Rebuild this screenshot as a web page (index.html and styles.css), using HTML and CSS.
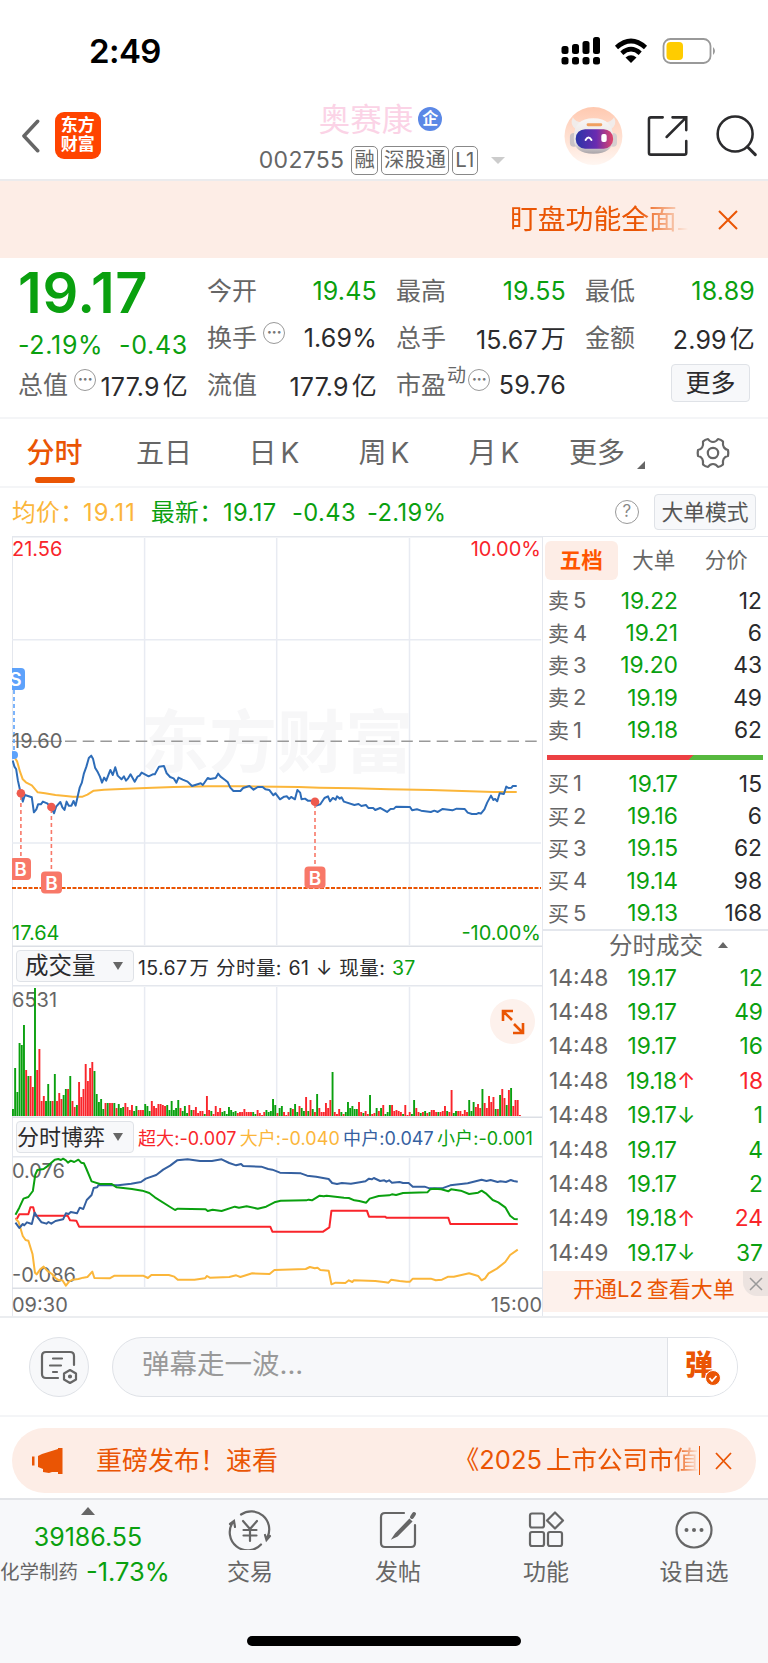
FILE: index.html
```html
<!DOCTYPE html>
<html lang="zh-CN">
<head>
    <meta charset="UTF-8">
    <meta name="viewport" content="width=device-width, initial-scale=1.0">
    <title>奥赛康 002755</title>
    <link rel="stylesheet" href="styles.css">
</head>
<body>
    <!-- Status bar -->
    <div class="status">
        <span class="clock">2:49</span>
        <svg class="status-icons" width="160" height="30" viewBox="0 0 160 30">
            <g fill="#000">
                <rect x="3.500" y="11" width="7" height="8" rx="2.500"/><rect x="14" y="9" width="7" height="10" rx="2.500"/>
                <rect x="24.500" y="6" width="7" height="13" rx="2.500"/><rect x="35" y="2" width="7" height="17" rx="2.500"/>
                <rect x="3.500" y="22" width="7" height="7.500" rx="2.500"/><rect x="14" y="22" width="7" height="7.500" rx="2.500"/>
                <rect x="24.500" y="22" width="7" height="7.500" rx="2.500"/><rect x="35" y="22" width="7" height="7.500" rx="2.500"/>
                <path d="M73 28l-5.500-5.500q5.500-4.500 11 0z"/>
            </g>
            <g fill="none" stroke="#000" stroke-width="4.600"><path d="M58.500 12.500q14.500-13 29 0M63.800 18.200q9.200-8 18.400 0"/></g>
            <rect x="105.500" y="4" width="47" height="24" rx="7" fill="none" stroke="#999" stroke-width="1.800"/>
            <path d="M155 12q4 4 0 8z" fill="#999"/>
            <rect x="108.500" y="7" width="16.500" height="18" rx="4" fill="#ffcc00"/>
        </svg>
    </div>

    <!-- Title bar -->
    <div class="header">
        <svg class="back" width="20" height="34" viewBox="0 0 20 34"><path d="M17 2L3 17l14 15" fill="none" stroke="#666" stroke-width="3.6" stroke-linecap="round" stroke-linejoin="round"/></svg>
        <div class="logo">东方<br>财富</div>
        <div class="title">
            <div class="name">奥赛康<span class="qi">企</span></div>
            <div class="code">002755<span class="tag">融</span><span class="tag">深股通</span><span class="tag">L1</span><i class="caret"></i></div>
        </div>
        <svg class="robot" width="60" height="60" viewBox="0 0 60 60">
            <defs>
                <linearGradient id="peach" x1="0" y1="0" x2="0" y2="1"><stop offset="0" stop-color="#ffc9b0"/><stop offset="1" stop-color="#fff6f1"/></linearGradient>
                <linearGradient id="visor"><stop offset="0" stop-color="#2a35a8"/><stop offset=".55" stop-color="#6a2bb0"/><stop offset="1" stop-color="#e0466a"/></linearGradient>
                <linearGradient id="shell" x1="0" y1="0" x2="0" y2="1"><stop offset="0" stop-color="#f8f6f5"/><stop offset=".7" stop-color="#e6e2e2"/><stop offset="1" stop-color="#aaa4a8"/></linearGradient>
            </defs>
            <circle cx="30" cy="30" r="29.5" fill="url(#peach)"/>
            <path d="M9 11q-4 8 4 13l8-8q-9 1-12-5zM51 11q4 8-4 13l-8-8q9 1 12-5z" fill="#f1ecea"/>
            <rect x="6" y="27" width="8" height="14" rx="4" fill="#c9c3c6"/><rect x="46" y="27" width="8" height="14" rx="4" fill="#d6cfd0"/>
            <path d="M10 32q0-20 20-20t20 20q0 16-20 16T10 32z" fill="url(#shell)"/>
            <rect x="23" y="17" width="16" height="3" rx="1.500" fill="#f0a060"/>
            <rect x="12" y="23" width="38" height="20" rx="9.500" fill="url(#visor)"/>
            <path d="M22 34q3-5 6 0" fill="none" stroke="#fff" stroke-width="2" stroke-linecap="round"/>
            <rect x="38" y="28" width="5.500" height="8" rx="2" fill="#fff"/>
        </svg>
        <svg class="share" width="42" height="42" viewBox="0 0 42 42"><path d="M16 2H4q-2 0-2 2v34q0 2 2 2h34q2 0 2-2V26M26 2h14v13M39 3L20 22" fill="none" stroke="#2b2b2d" stroke-width="2.6" stroke-linecap="round"/></svg>
        <svg class="search" width="42" height="42" viewBox="0 0 42 42"><circle cx="19.500" cy="19" r="17.800" fill="none" stroke="#2b2b2d" stroke-width="2.6"/><path d="M32 32l8 8" stroke="#2b2b2d" stroke-width="3" stroke-linecap="round"/></svg>
    </div>

    <div class="notice">
        <span class="notice-text">盯盘功能全面上</span>
        <svg width="20" height="20" viewBox="0 0 20 20"><path d="M1 1l18 18M19 1L1 19" stroke="#ea5504" stroke-width="2"/></svg>
    </div>

    <!-- Quote -->
    <div class="quote">
        <div class="main-price">
            <div class="price">19.17</div>
            <div class="change"><span>-2.19%</span><span>-0.43</span></div>
        </div>
        <div class="cell"><label>今开</label><b class="down">19.45</b></div>
        <div class="cell"><label>最高</label><b class="down">19.55</b></div>
        <div class="cell"><label>最低</label><b class="down">18.89</b></div>
        <div class="cell"><label>换手<i class="dots">···</i></label><b>1.69%</b></div>
        <div class="cell"><label>总手</label><b>15.67<em>万</em></b></div>
        <div class="cell"><label>金额</label><b>2.99<em>亿</em></b></div>
        <div class="cell"><label>总值<i class="dots">···</i></label><b>177.9<em>亿</em></b></div>
        <div class="cell"><label>流值</label><b>177.9<em>亿</em></b></div>
        <div class="cell"><label>市盈<sup>动</sup><i class="dots tight">···</i></label><b>59.76</b></div>
        <div class="cell last"><button class="more">更多</button></div>
    </div>

    <div class="tabs">
        <span class="tab on">分时</span>
        <span class="tab">五日</span>
        <span class="tab">日<u>K</u></span>
        <span class="tab">周<u>K</u></span>
        <span class="tab">月<u>K</u></span>
        <span class="tab drop">更多</span>
        <svg class="gear" width="34" height="32" viewBox="0 0 34 32" fill="none" stroke="#666" stroke-width="2.200"><path d="M12 2q2 3 5 3t5-3q3 .5 5 2.500-.5 4 1 6t4 2.500q.6 3 0 6-3 .5-4.300 2.700T27 27.500q-2 2-5 2.500-2-3-5-3t-5 3q-3-.5-5-2.500.5-3.600-.8-5.800T2 19q-.6-3 0-6 2.700-.4 4.100-2.500T7 4.500Q9 2.500 12 2z" stroke-linejoin="round"/><circle cx="17" cy="16" r="5.200"/></svg>
    </div>

    <div class="info">
        <span class="avg">均价：</span><span class="avg num1">19.11</span>
        <span class="new">最新：</span><span class="num2">19.17</span><span class="num3">-0.43</span><span>-2.19%</span>
        <span class="help">?</span>
        <button class="mode">大单模式</button>
    </div>

    <div class="board">
        <div class="charts">
            <!-- Price -->
            <div class="plot price-plot">
                <div class="watermark">东方财富</div>
                <svg width="529" height="411" viewBox="0 0 529 411">
                    <path class="grid" d="M132.600 2v407M264.700 2v407M397.500 2v407M0 103.700h529M0 307h529"/>
                    <path d="M0 205.300h50" stroke="#999" stroke-width="1.200"/>
                    <path d="M53 205.300h476" stroke="#999" stroke-width="1.400" stroke-dasharray="11.500 6.200"/>
                    <path d="M0 352h529" stroke="#ea5504" stroke-width="1.800" stroke-dasharray="4 1.500"/>
                    <g class="lines" transform="scale(.3476 .3333) translate(-35 -18)">
                        <polyline stroke="#fbb63a" points="44,685 50,695 58,725 66,748 75,757 92,766 100,776 109,787 130,790 160,795 190,798 210,800 238,800 252,794 270,782 300,779 350,777 420,774 500,771 600,769 700,769 800,770 860,771 920,773 1020,775 1120,778 1240,780 1330,783 1420,786 1487,786"/>
                        <polyline stroke="#2d6cb8" points="37,692 42,710 47,718 52,752 58,780 66,815 72,795 92,802 98,847 105,838 110,823 118,823 124,815 136,820 148,833 156,850 162,830 174,816 180,832 186,840 192,815 198,827 206,827 212,813 218,827 226,790 230,772 236,758 242,730 249,710 256,684 263,677 268,686 274,713 282,727 288,740 294,758 300,743 306,752 318,720 325,735 332,712 339,737 350,748 357,739 363,752 369,745 376,733 388,755 396,740 402,737 408,728 428,739 440,733 446,733 458,710 472,708 480,730 490,741 500,745 508,758 514,743 526,749 540,755 553,768 578,760 584,765 598,744 605,747 621,744 628,731 635,740 648,750 656,757 663,773 672,783 692,783 700,774 718,768 730,779 742,771 756,771 764,778 775,780 787,796 793,790 806,808 818,800 826,799 832,807 838,801 849,808 856,780 864,788 868,808 878,806 886,812 900,812 910,827 922,823 934,804 944,799 950,814 958,804 966,809 970,799 978,806 983,802 990,815 1020,825 1032,822 1040,828 1053,825 1060,834 1074,834 1080,840 1094,834 1114,846 1124,837 1134,836 1140,830 1180,831 1186,841 1200,838 1212,842 1240,846 1250,842 1260,846 1274,837 1302,841 1314,836 1337,837 1346,848 1358,852 1372,852 1378,849 1384,851 1394,838 1402,818 1413,797 1420,810 1425,807 1431,814 1438,790 1450,792 1457,770 1463,774 1472,773 1476,768 1487,768"/>
                    </g>
                    <path d="M2 154v65" stroke="#5da2fb" stroke-width="1.600" stroke-dasharray="4 3"/>
                    <circle cx="2" cy="219" r="4" fill="#5da2fb"/>
                    <path d="M8.900 260v62M39.400 273v62M303 268v62" stroke="#f87868" stroke-width="1.600" stroke-dasharray="4 3"/>
                    <g fill="#ee5a4e"><circle cx="8.900" cy="257.300" r="4.300"/><circle cx="39.400" cy="271" r="4.300"/><circle cx="303" cy="265.700" r="4.300"/></g>
                    <g class="mark">
                        <rect x="-8" y="132" width="21" height="22" rx="4"/><text x="3.500" y="150">S</text>
                        <rect x="-2" y="322" width="21" height="22" rx="4"/><text x="8.500" y="340">B</text>
                        <rect x="29" y="335.500" width="21" height="22" rx="4"/><text x="39.500" y="353.500">B</text>
                        <rect x="292.500" y="330.500" width="21" height="22" rx="4"/><text x="303" y="348.500">B</text>
                    </g>
                </svg>
                <span class="tl up">21.56</span><span class="tr up">10.00%</span>
                <span class="ml">19.60</span>
                <span class="bl down">17.64</span><span class="br down">-10.00%</span>
            </div>

            <div class="sub-head">
                <button class="pick">成交量</button>
                <p>15.67<em>万</em> 分时量: 61 ↓ 现量: <span class="down">37</span></p>
            </div>
            <!-- Volume -->
            <div class="plot vol-plot">
                <span class="tl">6531</span>
                <svg id="volume" width="529" height="132" viewBox="0 0 529 132">
                    <path class="grid" d="M132.600 2v130M264.700 2v130M397.500 2v130"/>
                </svg>
                <div class="expand"><svg width="24" height="26" viewBox="0 0 24 26" fill="none" stroke="#ea5504" stroke-width="2.600"><path d="M2 12V2h10M2 2l9 9M22 14v10H12M22 24l-9-9"/></svg></div>
            </div>

            <div class="sub-head game">
                <button class="pick">分时博弈</button>
                <p><span class="up">超大:-0.007</span><span class="avg">大户:-0.040</span><span class="mid">中户:0.047</span><span class="down">小户:-0.001</span></p>
            </div>
            <div class="plot game-plot">
                <span class="tl">0.076</span><span class="bl">-0.086</span>
                <svg width="529" height="133" viewBox="0 0 529 133">
                    <path class="grid" d="M132.600 2v129M264.700 2v129M397.500 2v129"/>
                    <g class="lines" transform="scale(.3476 .3333) translate(-35 -138)">
                        <polyline stroke="#f9252b" points="45,327 50,325 56,313 82,313 88,292 96,292 102,317 195,317 202,331 220,332 228,350 778,350 784,365 930,365 948,352 954,302 1056,302 1062,320 1108,320 1112,323 1290,323 1296,342 1490,342"/>
                        <polyline stroke="#fbb63a" points="46,327 54,336 66,378 74,390 82,392 94,432 101,488 106,493 116,478 126,470 136,482 150,492 160,504 170,511 180,511 190,527 200,514 210,509 226,507 240,503 252,501 266,485 272,504 316,505 330,497 412,497 426,504 436,495 486,495 502,500 512,509 560,509 590,505 596,498 604,503 660,501 680,496 692,501 726,490 776,492 790,480 880,477 892,471 906,475 914,473 922,480 946,482 954,523 966,518 994,519 1004,511 1014,516 1018,511 1080,513 1110,517 1118,518 1126,509 1150,513 1170,515 1180,515 1188,506 1240,506 1254,511 1272,509 1290,500 1306,500 1350,490 1376,498 1386,511 1396,505 1406,490 1430,476 1454,456 1468,435 1490,419"/>
                        <polyline stroke="#3560a0" points="45,338 56,354 66,342 70,346 78,337 92,342 100,308 110,324 120,337 134,341 140,336 148,341 160,333 182,328 190,310 198,312 204,306 222,310 230,293 240,297 250,270 264,255 270,234 280,232 284,225 340,226 378,221 406,216 420,206 450,195 470,179 490,167 510,151 540,148 576,153 610,153 638,148 660,159 680,166 694,162 700,168 752,170 772,177 784,179 806,188 866,190 884,197 910,200 946,207 956,219 970,222 984,219 1010,221 1040,216 1052,214 1062,206 1070,208 1076,204 1094,213 1106,211 1112,215 1120,211 1128,218 1150,216 1160,219 1176,219 1188,230 1222,230 1236,235 1272,235 1296,226 1346,220 1386,209 1400,213 1412,210 1432,216 1440,214 1456,216 1470,210 1478,213 1490,215"/>
                        <polyline stroke="#0aa00f" points="45,314 56,293 68,266 82,261 95,243 102,194 108,180 126,177 140,166 158,149 168,147 176,150 182,146 190,151 196,158 204,152 214,156 226,149 234,158 242,160 248,174 264,214 288,222 322,222 336,232 380,237 410,242 430,249 446,262 490,291 504,300 512,296 550,297 592,298 598,303 612,299 638,303 676,290 688,293 710,289 742,296 766,290 790,277 808,272 882,271 888,269 898,271 920,257 932,259 940,257 990,263 1004,264 1020,271 1034,273 1054,278 1064,266 1090,258 1120,256 1128,253 1140,255 1160,249 1230,247 1238,238 1250,236 1270,238 1290,244 1298,238 1326,242 1350,252 1376,248 1386,242 1398,250 1418,270 1434,277 1454,292 1468,317 1480,327 1490,328"/>
                    </g>
                </svg>
            </div>
            <div class="axis"><span>09:30</span><span>15:00</span></div>
        </div>

        <!-- Order book -->
        <div class="book">
            <div class="book-tabs"><span class="on">五档</span><span>大单</span><span>分价</span></div>
            <ul class="levels">
                <li><span>卖<u>5</u></span><b>19.22</b><i>12</i></li>
                <li><span>卖<u>4</u></span><b>19.21</b><i>6</i></li>
                <li><span>卖<u>3</u></span><b>19.20</b><i>43</i></li>
                <li><span>卖<u>2</u></span><b>19.19</b><i>49</i></li>
                <li><span>卖<u>1</u></span><b>19.18</b><i>62</i></li>
            </ul>
            <div class="ratio"></div>
            <ul class="levels">
                <li><span>买<u>1</u></span><b>19.17</b><i>15</i></li>
                <li><span>买<u>2</u></span><b>19.16</b><i>6</i></li>
                <li><span>买<u>3</u></span><b>19.15</b><i>62</i></li>
                <li><span>买<u>4</u></span><b>19.14</b><i>98</i></li>
                <li><span>买<u>5</u></span><b>19.13</b><i>168</i></li>
            </ul>
            <div class="ticks-head">分时成交</div>
            <ul class="ticks">
                <li><span>14:48</span><b>19.17</b><i>12</i></li>
                <li><span>14:48</span><b>19.17</b><i>49</i></li>
                <li><span>14:48</span><b>19.17</b><i>16</i></li>
                <li><span>14:48</span><b>19.18</b><s class="up">↑</s><i class="up">18</i></li>
                <li><span>14:48</span><b>19.17</b><s>↓</s><i>1</i></li>
                <li><span>14:48</span><b>19.17</b><i>4</i></li>
                <li><span>14:48</span><b>19.17</b><i>2</i></li>
                <li><span>14:49</span><b>19.18</b><s class="up">↑</s><i class="up">24</i></li>
                <li><span>14:49</span><b>19.17</b><s>↓</s><i>37</i></li>
            </ul>
            <div class="l2">开通L2<em>查看大单</em>
                <div class="l2-close"><svg width="14" height="14" viewBox="0 0 14 14"><path d="M1 1l12 12M13 1L1 13" stroke="#999" stroke-width="1.500"/></svg></div>
            </div>
        </div>
    </div>

    <!-- Comment bar -->
    <div class="comment">
        <div class="round">
            <svg width="38" height="34" viewBox="0 0 38 34" fill="none" stroke="#666" stroke-width="2.200" stroke-linecap="round"><path d="M18 28H6q-4 0-4-4V6q0-4 4-4h24q4 0 4 4v9M13 8.500h9M10 15.500h11M13 22h4"/><path d="M30 20l6 3.500v6L30 33l-6-3.500v-6z" stroke-linejoin="round"/><circle cx="30" cy="26.500" r="1"/></svg>
        </div>
        <div class="field">
            <span>弹幕走一波...</span>
            <div class="danmu">弹<svg width="16" height="16" viewBox="0 0 16 16"><circle cx="8" cy="8" r="7.500" fill="#ea5504" stroke="#fff"/><path d="M4.500 8l2.500 3 4.500-5" fill="none" stroke="#fff" stroke-width="1.800"/></svg></div>
        </div>
    </div>

    <div class="promo-wrap">
        <div class="promo">
            <svg width="32" height="28" viewBox="0 0 32 28" fill="#ea5504"><path d="M0 9.500h2.500v9H0zM6 9l4-2 16-5V1h4.500v26H26v-2h-6l-3 1-6-1v-3l-5-2z"/></svg>
            <span class="promo-a">重磅发布！速看</span>
            <span class="promo-b">《2025<em>上市公司市值</em></span>
            <svg class="promo-x" width="17" height="18" viewBox="0 0 17 18"><path d="M1 1l15 16M16 1L1 17" stroke="#ea5504" stroke-width="1.800"/></svg>
        </div>
    </div>

    <!-- Bottom nav -->
    <div class="nav">
        <div class="nav-items">
            <div class="index">
                <i></i>
                <div class="index-val">39186.55</div>
                <div class="index-row"><span>化学制药</span><b>-1.73%</b></div>
            </div>
            <div class="item">
                <svg width="44" height="40" viewBox="0 0 44 40" fill="none" stroke="#666" stroke-width="2.200" stroke-linecap="round"><path d="M13 4.500A18 18 0 0 1 39.500 27M33 34.500A18 18 0 0 1 5 12M2 14l4-3 1 6M42 26l-3.500 4-1.500-5M15 11l7 8 7-8M22 19v12M15.500 20h13M15.500 25.500h13"/></svg>
                <span>交易</span>
            </div>
            <div class="item">
                <svg width="40" height="40" viewBox="0 0 40 40" fill="none" stroke="#666" stroke-width="2.200" stroke-linecap="round"><path d="M26 3H7Q3 3 3 7v26q0 4 4 4h26q4 0 4-4V15"/><path d="M36 4l-2 3" stroke-width="4"/><path d="M31.500 10L18 24l-2 3 3-1.500 14-14z" fill="#666"/></svg>
                <span>发帖</span>
            </div>
            <div class="item">
                <svg width="40" height="40" viewBox="0 0 40 40" fill="none" stroke="#666" stroke-width="2.200" stroke-linejoin="round"><rect x="4" y="3.500" width="14" height="14" rx="2"/><rect x="4" y="22" width="14" height="14" rx="2"/><rect x="22" y="22" width="14" height="14" rx="2"/><path d="M29 2.500l8 8-8 8-8-8z"/></svg>
                <span>功能</span>
            </div>
            <div class="item">
                <svg width="40" height="40" viewBox="0 0 40 40"><circle cx="20" cy="20" r="17.500" fill="none" stroke="#666" stroke-width="2.200"/><g fill="#666"><circle cx="12.500" cy="20" r="2"/><circle cx="20" cy="20" r="2"/><circle cx="27.500" cy="20" r="2"/></g></svg>
                <span>设自选</span>
            </div>
        </div>
        <div class="home"></div>
    </div>

    <script src="script.js"></script>
</body>
</html>
```
FILE: styles.css
```css
* {
    box-sizing: border-box;
}

body {
    margin: 0;
    width: 768px;
    font-family: Inter, "Noto Sans CJK SC", sans-serif;
    font-size: 24px;
    color: #2b2b2d;
    background: #fff;
    overflow: hidden;
}

i, em {
    font-style: normal;
}

u, s {
    text-decoration: none;
}

b {
    font-weight: 400;
}

button {
    font-family: inherit;
    color: #2b2b2d;
    background: #f7f8fa;
    border: 1.5px solid #dfe2e7;
    border-radius: 4px;
    padding: 0;
}

.up { color: #f9252b !important; }
.down { color: #0aa00f !important; }
.avg { color: #fbb63a; }
.mid { color: #3560a0; }

/* Status bar */
.status {
    height: 100px;
    padding: 0 50px 0 89px;
    display: flex;
    justify-content: space-between;
    align-items: center;
}

.clock {
    font-size: 33px;
    font-weight: 600;
    letter-spacing: -.6px;
    padding-top: 2px;
    color: #000;
}

/* Title bar */
.header {
    height: 81px;
    border-bottom: 2px solid #ebebed;
    display: flex;
    align-items: center;
    padding: 0 11px 8px 21px;
}

.logo {
    width: 47px;
    height: 47px;
    margin-left: 14px;
    border-radius: 9px;
    background: #ff4400;
    color: #fff;
    font-size: 17px;
    font-weight: 700;
    line-height: 19px;
    text-align: center;
    padding-top: 4px;
}

.title {
    width: 246px;
    margin-left: 158px;
    padding-top: 6px;
}

.name {
    height: 40px;
    padding: 0 0 4px 60px;
    display: flex;
    align-items: center;
    font-size: 31.5px;
    color: #fbd3e6;
}

.qi {
    width: 24px;
    height: 24px;
    margin: 3px 0 0 5px;
    border-radius: 50%;
    background: #5b88e6;
    color: #fff;
    font-size: 16px;
    font-weight: 700;
    line-height: 22px;
    text-align: center;
}

.code {
    height: 36px;
    margin-top: 3px;
    display: flex;
    align-items: center;
    color: #666;
    font-size: 23px;
    letter-spacing: .3px;
    white-space: nowrap;
}

.tag {
    height: 29px;
    margin-left: 3px;
    padding: 0 2px;
    border: 1.5px solid #888;
    border-radius: 5px;
    font-size: 20.4px;
    line-height: 25px;
}

.tag:first-of-type {
    margin-left: 7px;
}

.caret {
    margin-left: 13px;
    border: 7px solid transparent;
    border-top-color: #ccc;
    border-bottom: 0;
}

.robot { margin-left: 59px; }
.share { margin-left: 24px; }
.search { margin-left: 28px; }

.notice {
    height: 77px;
    background: #fdede6;
    display: flex;
    align-items: center;
    justify-content: flex-end;
    padding: 0 30px 0 0;
}

.notice-text {
    width: 178px;
    margin-right: 30px;
    padding-bottom: 5px;
    overflow: hidden;
    white-space: nowrap;
    font-size: 27.8px;
    color: #ea5504;
    -webkit-mask-image: linear-gradient(90deg, #000 72%, transparent);
    mask-image: linear-gradient(90deg, #000 72%, transparent);
}

/* Quote */
.quote {
    height: 161px;
    padding: 9px 12px 0 18px;
    border-bottom: 2px solid #f4f5f7;
    display: grid;
    grid-template-columns: repeat(4, 170px);
    grid-template-rows: repeat(3, 47px);
    column-gap: 19px;
}

.main-price {
    grid-row: span 2;
    color: #0aa00f;
}

.price {
    font-size: 56px;
    font-weight: 600;
    line-height: 53px;
    letter-spacing: .7px;
}

.change {
    display: flex;
    justify-content: space-between;
    font-size: 25px;
    letter-spacing: .7px;
    line-height: 51px;
}

.cell {
    display: flex;
    align-items: center;
    justify-content: space-between;
    white-space: nowrap;
}

.cell b {
    font-size: 25px;
    letter-spacing: .2px;
}

.cell label {
    display: flex;
    align-items: center;
    padding-bottom: 3px;
    font-size: 25px;
    color: #666;
}

.cell em {
    margin-left: 3px;
    position: relative;
    top: -1px;
}

.cell sup {
    font-size: 19px;
    line-height: 20px;
    margin: -14px 0 0 1px;
}

.dots {
    width: 22px;
    height: 22px;
    margin: -7px 0 0 6px;
    border: 1.5px solid #999;
    border-radius: 50%;
    font-size: 16px;
    font-weight: 700;
    line-height: 18px;
    text-align: center;
    color: #777;
    letter-spacing: -.5px;
}

.dots.tight {
    margin-left: 2px;
}

.last {
    justify-content: flex-end;
}

.more {
    width: 79px;
    height: 38px;
    margin: 0 5px 3px 0;
    font-size: 25px;
    line-height: 31px;
}

/* Period tabs */
.tabs {
    height: 69px;
    border-bottom: 2px solid #f4f5f7;
    display: flex;
    align-items: center;
    font-size: 28px;
    color: #666;
}

.tab {
    width: 110px;
    text-align: center;
    line-height: 66px;
    height: 66px;
}

.tab u {
    margin-left: 4px;
}

.tab.on {
    width: 109px;
    color: #ea5504;
    font-weight: 500;
}

.tab.on::after {
    content: "";
    display: block;
    width: 40px;
    height: 6px;
    margin: -9px auto 0;
    border-radius: 3px;
    background: #ea5504;
}

.tab.drop {
    width: 96px;
    position: relative;
}

.drop::after {
    content: "";
    position: absolute;
    right: 0;
    top: 41px;
    border-left: 8px solid transparent;
    border-bottom: 8px solid #666;
}

.gear {
    margin-left: 51px;
}

.info {
    height: 48px;
    padding: 0 12px;
    display: flex;
    align-items: center;
    white-space: nowrap;
    color: #0aa00f;
    font-size: 23.7px;
    letter-spacing: .4px;
}

.info .avg { width: 71px; padding-bottom: 2px; }
.info .num1 { width: 68px; padding: 0; letter-spacing: 1px; }
.info .new { width: 72px; padding-bottom: 2px; }
.info .num2 { width: 69px; }
.info .num3 { width: 75px; }

.info .help {
    width: 24px;
    height: 24px;
    margin-left: auto;
    border: 1.5px solid #999;
    border-radius: 50%;
    color: #888;
    font-size: 17px;
    line-height: 21px;
    text-align: center;
}

.mode {
    width: 102px;
    height: 36px;
    margin-left: 15px;
    font-size: 21.8px;
    line-height: 30px;
    color: #555;
}

/* Charts */
.board {
    display: flex;
    height: 782px;
    border-bottom: 2px solid #ebedf0;
}

.charts {
    width: 530px;
    margin-left: 12px;
    box-shadow: inset 1px 0 #e4e7ed;
}

.plot {
    position: relative;
    box-shadow: inset 0 1.5px #e4e7ed, inset 0 -1.5px #dcdfe5;
    overflow: hidden;
}

.plot svg {
    display: block;
    position: relative;
}

.plot > span {
    position: absolute;
    font-size: 20px;
    line-height: 24px;
    color: #666;
}

.tl { left: 0; top: 1px; }
.tr { right: 1px; top: 1px; }
.ml { left: 0; top: 193px; }
.bl { left: 0; bottom: 2px; }
.br { right: 1px; bottom: 2px; }

.price-plot { height: 411px; }
.vol-plot { height: 133px; }
.game-plot { height: 133px; }
.vol-plot .tl, .game-plot .tl { top: 3px; }

.grid {
    fill: none;
    stroke: #e8ebf2;
    stroke-width: 1.5;
}

.lines polyline {
    fill: none;
    stroke-width: 2;
    stroke-linejoin: round;
    vector-effect: non-scaling-stroke;
}

.mark rect { fill: #f87868; }
.mark rect:first-child { fill: #5da2fb; }

.mark text {
    fill: #fff;
    font-size: 19px;
    font-weight: 600;
    text-anchor: middle;
}

.watermark {
    position: absolute;
    left: 129px;
    top: 152px;
    font-size: 68px;
    font-weight: 700;
    color: #f7f7f8;
    white-space: nowrap;
}

.sub-head {
    height: 38px;
    display: flex;
    align-items: center;
    padding-left: 4px;
    white-space: nowrap;
}

.sub-head p {
    margin: 0 0 0 4px;
    font-size: 19.5px;
    letter-spacing: .4px;
    word-spacing: .8px;
}

.sub-head p em {
    margin-left: 2px;
}

.sub-head.game p {
    flex: 1;
    display: flex;
    justify-content: space-between;
    padding-right: 9px;
    font-size: 18px;
    letter-spacing: .1px;
}

.pick {
    width: 118px;
    height: 32px;
    padding: 0 0 1px 8px;
    font-size: 23.5px;
    line-height: 26px;
    display: flex;
    align-items: center;
    justify-content: space-between;
}

.game .pick {
    padding-left: 0;
    font-size: 22px;
}

.pick::after {
    content: "";
    margin-right: 10px;
    border: 5px solid transparent;
    border-top: 8px solid #666;
    border-bottom: 0;
}

.expand {
    position: absolute;
    right: 7px;
    top: 14px;
    width: 45px;
    height: 45px;
    border-radius: 50%;
    background: #fdf1ec;
    display: flex;
    align-items: center;
    justify-content: center;
}

.axis {
    display: flex;
    justify-content: space-between;
    font-size: 20px;
    line-height: 32px;
    color: #666;
}

/* Order book */
.book {
    width: 226px;
    border-left: 1.5px solid #e4e7ed;
}

.book-tabs {
    display: flex;
    padding: 4px 0 0 2px;
    border-top: 1px solid #e4e7ed;
    font-size: 21.5px;
    line-height: 38px;
    text-align: center;
    color: #666;
}

.book-tabs span {
    width: 72.5px;
    height: 39px;
}

.book-tabs .on {
    background: #fdede6;
    border-radius: 6px;
    color: #ff5500;
    font-weight: 700;
}

.levels, .ticks {
    margin: 0;
    padding: 0;
    list-style: none;
}

.levels {
    padding-top: 4px;
}

.levels li {
    display: flex;
    height: 32.4px;
    align-items: center;
    padding: 0 6px 0 5px;
    font-size: 22.8px;
}

.levels span {
    width: 56px;
    padding-bottom: 2px;
    font-size: 21px;
    color: #666;
}

.levels u {
    margin-left: 4px;
    font-size: 22px;
}

.levels b {
    width: 74px;
    text-align: right;
    color: #0aa00f;
}

.levels i, .ticks i {
    flex: 1;
    text-align: right;
}

.ratio {
    height: 5px;
    margin: 9px 5px 3px 4px;
    background: linear-gradient(135deg, #ec4043 0, #ec4043 66.5%, #56b83e 66.5%);
}

.ticks-head {
    height: 31px;
    border-top: 2px solid #e4e7ed;
    text-align: center;
    color: #666;
    font-size: 23.5px;
    line-height: 29px;
    padding-left: 26px;
}

.ticks-head::after {
    content: "";
    display: inline-block;
    margin: 0 0 6px 15px;
    border: 5px solid transparent;
    border-bottom: 6px solid #666;
    border-top: 0;
}

.ticks li {
    display: flex;
    height: 34.4px;
    align-items: center;
    padding: 0 5px 0 6px;
    font-size: 22.8px;
    color: #0aa00f;
}

.ticks span {
    width: 60px;
    color: #666;
}

.ticks b {
    width: 68px;
    text-align: right;
}

.ticks s {
    width: 16px;
    font-size: 22px;
}

.l2 {
    position: relative;
    height: 41px;
    margin-top: 2px;
    background: #fdf1ec;
    color: #ea5504;
    font-size: 22px;
    line-height: 37px;
    padding-left: 30px;
}

.l2 em {
    margin-left: 4px;
}

.l2-close {
    position: absolute;
    right: 0;
    top: 0;
    width: 25px;
    height: 25px;
    border-radius: 0 0 0 14px;
    background: #ece3e0;
    display: flex;
    align-items: center;
    justify-content: center;
}

/* Comment bar */
.comment {
    height: 99px;
    padding: 0 30px 0 29px;
    border-bottom: 2px solid #f4f5f7;
    display: flex;
    align-items: center;
    gap: 23px;
}

.round {
    width: 60px;
    height: 60px;
    border: 1.5px solid #dfe2e7;
    border-radius: 50%;
    background: #f7f8fa;
    display: flex;
    align-items: center;
    justify-content: center;
}

.field {
    flex: 1;
    height: 60px;
    border: 1.5px solid #dfe2e7;
    border-radius: 30px;
    background: #f7f8fa;
    display: flex;
    justify-content: space-between;
    overflow: hidden;
    padding-left: 29px;
    font-size: 27.5px;
    line-height: 53px;
    color: #999;
}

.danmu {
    position: relative;
    width: 70px;
    border-left: 1.5px solid #dfe2e7;
    background: #fff;
    padding-left: 17px;
    font-size: 28px;
    font-weight: 900;
    line-height: 55px;
    color: #ea5504;
}

.danmu svg {
    position: absolute;
    left: 37px;
    top: 32px;
}

.promo-wrap {
    height: 81px;
    padding: 11px 12px 0;
}

.promo {
    height: 65px;
    padding: 0 24px 0 20px;
    border-radius: 33px;
    background: #fdede6;
    display: flex;
    align-items: center;
    color: #ea5504;
    font-size: 26px;
    white-space: nowrap;
}

.promo-a {
    margin-left: 32px;
    padding-bottom: 4px;
}

.promo-b {
    width: 240px;
    height: 29px;
    line-height: 27px;
    margin-left: auto;
    border-right: 1.5px solid #ea5504;
    display: flex;
    justify-content: flex-end;
    font-size: 25.5px;
}

.promo-b em {
    margin-left: 4px;
    -webkit-mask-image: linear-gradient(90deg, #000 85%, transparent);
    mask-image: linear-gradient(90deg, #000 85%, transparent);
}

.promo-x {
    margin-left: 15px;
}

/* Bottom nav */
.nav {
    height: 166px;
    border-top: 2px solid #e2e4e8;
    background: #f7f8fa;
}

.nav-items {
    display: flex;
    height: 136px;
}

.index {
    width: 176px;
    color: #0aa00f;
    text-align: center;
    padding-top: 7px;
}

.index i {
    display: block;
    width: 14px;
    margin: 0 auto;
    border: 7px solid transparent;
    border-bottom: 8px solid #666;
    border-top: 0;
}

.index-val {
    line-height: 44px;
    font-size: 25px;
}

.index-row {
    display: flex;
    align-items: center;
    gap: 8px;
    height: 24px;
    white-space: nowrap;
    font-size: 25.5px;
}

.index-row span {
    padding-bottom: 2px;
    font-size: 19.5px;
    color: #666;
}

.item {
    width: 148px;
    padding-top: 10px;
    display: flex;
    flex-direction: column;
    align-items: center;
    color: #666;
    font-size: 23px;
}

.item span {
    line-height: 45px;
}

.home {
    width: 274px;
    height: 10px;
    margin: 0 auto;
    border-radius: 5px;
    background: #000;
}
```
FILE: script.js
```js
// One bar per minute: g = down, r = up, number = bar height
const bars = `g7 g48 g24 g73 g71 g91 r46 g40 r40 r29 g128 r46 r67 r15 r20 g15 g32 g15 r15 g42
r15 r23 r17 g21 g27 r27 g40 r15 r9 g11 r34 r19 r27 r52 r35 r48 r54 g45 g22 g14
g17 g7 r13 g13 r13 r13 g13 r8 g12 g8 g9 r13 r9 r6 r11 g5 g10 r6 r6 r6
g12 g10 g5 r15 r10 r8 r12 r12 r11 r10 g11 g6 g15 g6 g8 g16 r8 g5 g10 g3
r11 g6 r6 r9 r3 r5 r5 g2 r20 r6 g5 r2 r10 r4 r8 g4 g5 g2 g9 g6
g4 g5 r3 r4 r4 r7 r4 r4 r4 g4 g2 r6 r3 r1 r4 g6 g4 g5 g17 g11
r3 g8 g10 r4 r1 r4 g8 r7 g12 g4 r10 g8 g5 r19 g5 r16 g7 r4 g22 r8
r4 r4 r13 r8 r16 g44 r4 r2 r7 g4 r2 g4 g14 g8 g10 g7 g7 r14 r4 g3
r5 r2 g21 r2 r3 g8 r5 g8 r11 g2 g4 g11 r11 r5 r6 r5 r4 g2 r11 r1
r4 g2 g16 r8 r4 g3 r4 g5 r3 g4 r6 r6 r4 g4 r4 r5 r10 g5 r4 r26
g3 g5 r5 r5 r2 r6 r4 g16 g5 g14 r9 r12 r8 g27 r13 r8 r20 r14 r19 g7
r7 g21 r27 r18 g11 r26 g28 r10 r16 r16 r1`.split(/\s+/);

const step = 529 / 240;
const svg = document.getElementById('volume');

bars.forEach((bar, i) => {
    const h = Number(bar.slice(1));
    const rect = document.createElementNS('http://www.w3.org/2000/svg', 'rect');
    rect.setAttribute('x', (i * step).toFixed(2));
    rect.setAttribute('y', 131 - h);
    rect.setAttribute('width', 1.9);
    rect.setAttribute('height', h);
    rect.setAttribute('fill', bar[0] === 'g' ? '#0aa00f' : '#f9252b');
    svg.appendChild(rect);
});
```
